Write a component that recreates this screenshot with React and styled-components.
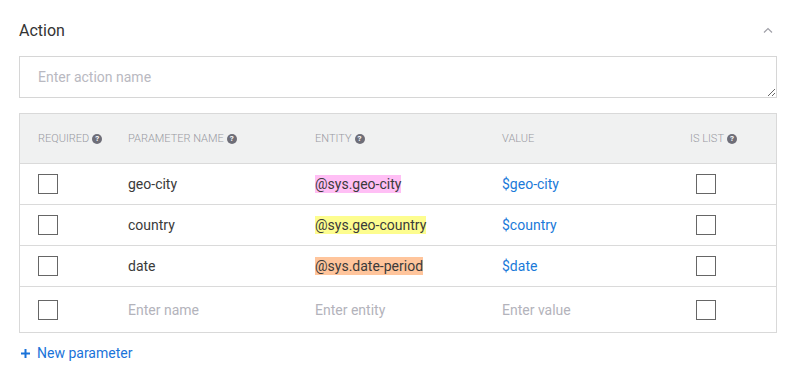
import styled, { createGlobalStyle } from "styled-components";

const GlobalStyle = createGlobalStyle`
    body {
        margin: 0;
        background: #fff;
        font-family: Roboto, "Liberation Sans", sans-serif;
    }
`;

const Page = styled.div`
    width: 758px;
    padding: 18px 20px 0 19px;
`;

const TitleRow = styled.div`
    display: flex;
    align-items: center;
    justify-content: space-between;
    height: 24px;
    margin-bottom: 14px;

    h2 {
        margin: 0;
        font-size: 16px;
        font-weight: 400;
        color: #333;
    }

    svg {
        margin-right: 4px;
    }
`;

const NameInput = styled.textarea`
    display: block;
    box-sizing: border-box;
    width: 100%;
    height: 42px;
    margin: 0 0 15px;
    padding: 12px 18px;
    border: 1px solid #d6d6d6;
    font-family: inherit;
    font-size: 14px;
    color: #333;
    resize: vertical;
    outline: none;

    &::placeholder {
        color: #b9b9c1;
    }
`;

const Table = styled.div`
    border: 1px solid #d9d9d9;
`;

const Row = styled.div`
    display: grid;
    box-sizing: border-box;
    grid-template-columns: 90px 187px 187px 188px 1fr;
    align-items: center;
    height: ${p => p.h}px;
    padding-left: 18px;
    background: ${p => (p.head ? "#f0f1f1" : "#fff")};
    border-top: ${p => (p.first ? "none" : "1px solid #dadada")};
    font-size: 14px;
    color: #3a3a3a;
`;

const HeadCell = styled.div`
    display: flex;
    align-items: center;
    gap: 3px;
    font-size: 11px;
    font-weight: 300;
    color: #999aa2;
    text-transform: uppercase;
`;

const Help = styled.span`
    display: inline-flex;
    align-items: center;
    justify-content: center;
    width: 10px;
    height: 10px;
    border-radius: 50%;
    background: #6e6e78;
    color: #fff;
    font-size: 8px;
    font-weight: 700;
    line-height: 1;
`;

const Check = styled.span`
    display: block;
    box-sizing: border-box;
    width: 20px;
    height: 20px;
    border: 1.5px solid #666;
    margin-left: ${p => p.shift || 0}px;
`;

const Entity = styled.span`
    background: ${p => p.color};
    padding: 1px 0;
`;

const Value = styled.span`
    color: #1a7ad9;
`;

const Placeholder = styled.span`
    color: #b3b3bb;
`;

const AddLink = styled.div`
    display: flex;
    align-items: center;
    gap: 7px;
    margin-top: 12px;
    padding-left: 2px;
    font-size: 14px;
    font-weight: 400;
    color: #1a73d9;
`;

const params = [
    { name: "geo-city", entity: "@sys.geo-city", color: "#ffbff5", value: "$geo-city" },
    { name: "country", entity: "@sys.geo-country", color: "#fdfd8f", value: "$country" },
    { name: "date", entity: "@sys.date-period", color: "#ffc59c", value: "$date" },
];

function Head({ children, help }) {
    return (
        <HeadCell>
            {children}
            {help && <Help>?</Help>}
        </HeadCell>
    );
}

export default function App() {
    return (
        <Page>
            <GlobalStyle />
            <TitleRow>
                <h2>Action</h2>
                <svg width="10" height="6" viewBox="0 0 10 6">
                    <polyline points="1,5.5 5,1.5 9,5.5" fill="none" stroke="#a0a0a8" strokeWidth="1.2" />
                </svg>
            </TitleRow>
            <NameInput placeholder="Enter action name" />
            <Table>
                <Row head first h={49}>
                    <Head help>Required</Head>
                    <Head help>Parameter name</Head>
                    <Head help>Entity</Head>
                    <Head>Value</Head>
                    <Head help>Is list</Head>
                </Row>
                {params.map(p => (
                    <Row key={p.name} h={41}>
                        <Check />
                        <span>{p.name}</span>
                        <span><Entity color={p.color}>{p.entity}</Entity></span>
                        <Value>{p.value}</Value>
                        <Check shift={6} />
                    </Row>
                ))}
                <Row h={46}>
                    <Check />
                    <Placeholder>Enter name</Placeholder>
                    <Placeholder>Enter entity</Placeholder>
                    <Placeholder>Enter value</Placeholder>
                    <Check shift={6} />
                </Row>
            </Table>
            <AddLink>
                <svg width="9" height="9" viewBox="0 0 9 9">
                    <path d="M4.5 0v9M0 4.5h9" stroke="#1a73d9" strokeWidth="2" />
                </svg>
                New parameter
            </AddLink>
        </Page>
    );
}
